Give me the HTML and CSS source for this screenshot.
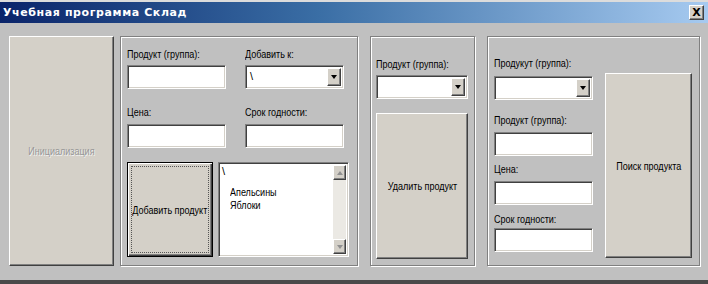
FILE: index.html
```html
<!DOCTYPE html>
<html lang="ru">
<head>
<meta charset="utf-8">
<title>Учебная программа Склад</title>
<link rel="stylesheet" href="styles.css">
</head>
<body>
<div class="win">
  <div class="title">
    <span class="title-text">Учебная программа Склад</span>
    <span class="close">X</span>
  </div>
  <div class="client">
    <div class="btn init"><span class="t dis">Инициализация</span></div>

    <div class="group g1">
      <div class="cols">
        <div class="col">
          <div class="lbl"><span class="n">Продукт (группа):</span></div>
          <div class="edit e1"></div>
          <div class="lbl l2"><span class="n">Цена:</span></div>
          <div class="edit e2"></div>
        </div>
        <div class="col">
          <div class="lbl"><span class="n">Добавить к:</span></div>
          <div class="combo e1"><span class="val">\</span><span class="drop"><i class="tri"></i></span></div>
          <div class="lbl l2"><span class="n">Срок годности:</span></div>
          <div class="edit e2"></div>
        </div>
      </div>
      <div class="bottom">
        <div class="btn def add"><div class="focus"><span class="t">Добавить продукт</span></div></div>
        <div class="listbox">
          <div class="items">
            <div class="item root">\</div>
            <div class="item sub"><span class="n">Апельсины</span></div>
            <div class="item sub"><span class="n">Яблоки</span></div>
          </div>
          <div class="vscroll">
            <span class="sbtn"><i class="tri up"></i></span>
            <span class="track"></span>
            <span class="sbtn"><i class="tri down"></i></span>
          </div>
        </div>
      </div>
    </div>

    <div class="group g2">
      <div class="lbl"><span class="n">Продукт (группа):</span></div>
      <div class="combo c2"><span class="val"></span><span class="drop"><i class="tri"></i></span></div>
      <div class="btn del"><span class="t">Удалить продукт</span></div>
    </div>

    <div class="group g3">
      <div class="col3">
        <div class="lbl"><span class="n">Продукут (группа):</span></div>
        <div class="combo c3"><span class="val"></span><span class="drop"><i class="tri"></i></span></div>
        <div class="lbl m2"><span class="n">Продукт (группа):</span></div>
        <div class="edit f2"></div>
        <div class="lbl m3"><span class="n">Цена:</span></div>
        <div class="edit f3"></div>
        <div class="lbl m4"><span class="n">Срок годности:</span></div>
        <div class="edit f4"></div>
      </div>
      <div class="btn find"><span class="t">Поиск продукта</span></div>
    </div>
  </div>
</div>
</body>
</html>
```
FILE: styles.css
```css
* { box-sizing: border-box; }
html, body { margin: 0; padding: 0; }
body {
  width: 708px;
  height: 284px;
  overflow: hidden;
  background: #c0c0c0;
  font-family: "Liberation Sans", Arial, sans-serif;
  font-size: 11px;
  color: #000;
}
.win {
  width: 708px;
  height: 284px;
  display: flex;
  flex-direction: column;
  border-top: 2px solid #dcdcdc;
  border-bottom: 4px solid #4a4a4a;
}
.title {
  height: 21px;
  background: linear-gradient(to right, #0a246a 0%, #3a6ea5 45%, #a6caf0 100%);
  display: flex;
  align-items: center;
  padding: 0 4px 0 3px;
}
.title-text {
  color: #fff;
  font-family: "DejaVu Sans", sans-serif;
  font-weight: bold;
  font-size: 11px;
  letter-spacing: 0.6px;
}
.close {
  margin-left: auto;
  width: 15px;
  height: 15px;
  background: #d4d0c8;
  border-top: 1px solid #fff;
  border-left: 1px solid #fff;
  border-right: 1px solid #404040;
  border-bottom: 1px solid #404040;
  box-shadow: inset -1px -1px 0 #808080;
  font-family: "DejaVu Sans", sans-serif;
  font-weight: bold;
  font-size: 11px;
  line-height: 13px;
  text-align: center;
}
.client {
  flex: 1;
  display: flex;
  align-items: flex-start;
  padding: 13px 0 0 9px;
}
.n {
  display: inline-block;
  white-space: nowrap;
  transform: scaleX(0.82);
  transform-origin: 0 50%;
}
.t {
  display: inline-block;
  white-space: nowrap;
  transform: scaleX(0.82);
  transform-origin: 50% 50%;
}
.btn {
  background: #d4d0c8;
  border-top: 1px solid #fff;
  border-left: 1px solid #fff;
  border-right: 1px solid #404040;
  border-bottom: 1px solid #404040;
  box-shadow: inset -1px -1px 0 #808080;
  display: flex;
  align-items: center;
  justify-content: center;
}
.init { width: 105px; height: 230px; }
.dis { color: #979797; text-shadow: 1px 1px 0 #f2f2f2; }
.group {
  height: 230px;
  border: 1px solid #808080;
  box-shadow: inset 1px 1px 0 #fff, 1px 1px 0 #fff;
}
.g1 { width: 238px; margin-left: 6px; padding: 11px 0 0 6px; }
.g2 { width: 105px; margin-left: 12px; padding: 21px 0 0 5px; }
.g3 { width: 213px; margin-left: 12px; padding: 20px 0 0 6px; display: flex; align-items: flex-start; }
.lbl { height: 13px; line-height: 13px; white-space: nowrap; }
.cols { display: flex; gap: 19px; }
.col { width: 99px; }
.edit, .combo {
  background: #fff;
  border-top: 1px solid #808080;
  border-left: 1px solid #808080;
  border-right: 1px solid #fff;
  border-bottom: 1px solid #fff;
  box-shadow: inset 1px 1px 0 #404040, inset -1px -1px 0 #d4d0c8;
  height: 24px;
}
.e1 { margin-top: 4px; }
.l2 { margin-top: 17px; }
.e2 { margin-top: 5px; }
.combo { display: flex; padding: 2px; }
.combo .val { flex: 1; padding: 2px 0 0 2px; line-height: 13px; }
.drop {
  width: 14px;
  background: #d4d0c8;
  border-top: 1px solid #fff;
  border-left: 1px solid #fff;
  border-right: 1px solid #404040;
  border-bottom: 1px solid #404040;
  box-shadow: inset -1px -1px 0 #808080;
  display: flex;
  align-items: center;
  justify-content: center;
}
.tri {
  width: 0; height: 0;
  border-left: 3px solid transparent;
  border-right: 3px solid transparent;
  border-top: 4px solid #000;
}
.bottom { display: flex; gap: 5px; margin-top: 14px; }
.add { width: 86px; height: 95px; }
.def { border: 1px solid #000; box-shadow: inset 1px 1px 0 #fff, inset -1px -1px 0 #404040, inset -2px -2px 0 #808080; padding: 3px; }
.focus {
  width: 100%; height: 100%;
  border: 1px dotted #555;
  display: flex; align-items: center; justify-content: center;
}
.listbox {
  width: 131px; height: 95px;
  display: flex;
  background: #fff;
  border-top: 1px solid #808080;
  border-left: 1px solid #808080;
  border-right: 1px solid #fff;
  border-bottom: 1px solid #fff;
  box-shadow: inset 1px 1px 0 #404040, inset -1px -1px 0 #d4d0c8;
  padding: 2px;
}
.items { flex: 1; padding: 0 0 0 1px; }
.item { line-height: 13px; }
.root { margin-bottom: 8px; }
.sub { padding-left: 8px; }
.vscroll { width: 13px; display: flex; flex-direction: column; background: #ebe9e4; }
.sbtn {
  height: 15px;
  background: #d4d0c8;
  border-top: 1px solid #fff;
  border-left: 1px solid #fff;
  border-right: 1px solid #404040;
  border-bottom: 1px solid #404040;
  box-shadow: inset -1px -1px 0 #808080;
  display: flex; align-items: center; justify-content: center;
}
.track { flex: 1; }
.vscroll .tri { border-top-color: #909090; }
.vscroll .tri.up { border-top: 0; border-bottom: 4px solid #909090; }
.c2 { width: 92px; margin-top: 4px; }
.del { width: 92px; height: 146px; margin-top: 14px; }
.col3 { width: 99px; }
.c3 { margin-top: 6px; }
.m2 { margin-top: 14px; }
.f2 { margin-top: 5px; }
.m3 { margin-top: 7px; }
.f3 { margin-top: 5px; }
.m4 { margin-top: 8px; }
.f4 { margin-top: 2px; }
.find { width: 87px; height: 185px; margin: 16px 0 0 12px; }
```
